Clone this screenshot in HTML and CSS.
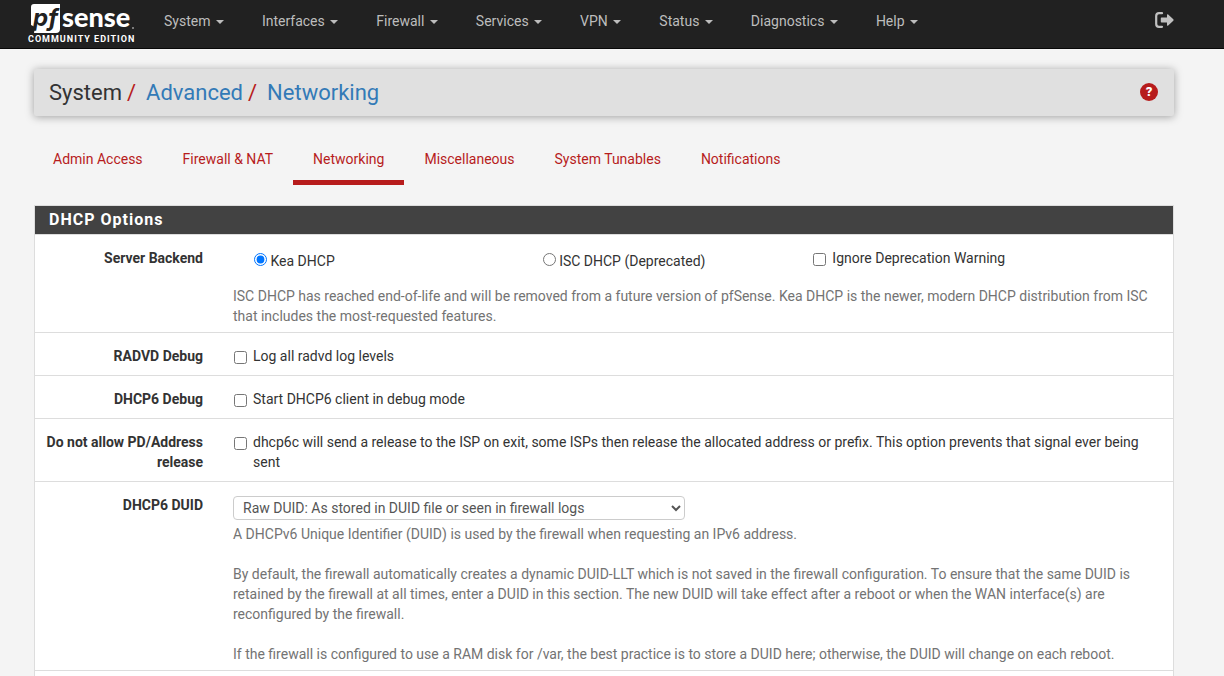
FILE: index.html
```html
<!DOCTYPE html>
<html lang="en">
<head>
    <meta charset="UTF-8">
    <title>System: Advanced: Networking</title>
    <link rel="stylesheet" href="styles.css">
</head>
<body>
    <header class="topbar">
        <a class="brand" href="#">
            <svg class="logo" width="108" height="34" viewBox="0 0 108 34" role="img">
                <path d="M6 4H32V29Q32 33 28 33H6L7 27L3 25V7Q3 4 6 4Z" fill="#fff"/>
                <text class="logo-pf" x="5" y="26">pf</text>
                <text class="logo-sense" x="34" y="27">sense</text>
                <circle cx="105" cy="28" r="1" fill="#999"/>
            </svg>
            <span class="edition">COMMUNITY EDITION</span>
        </a>
        <nav class="menu">
            <a class="menu-item" href="#">System <i class="caret"></i></a>
            <a class="menu-item" href="#">Interfaces <i class="caret"></i></a>
            <a class="menu-item" href="#">Firewall <i class="caret"></i></a>
            <a class="menu-item" href="#">Services <i class="caret"></i></a>
            <a class="menu-item" href="#">VPN <i class="caret"></i></a>
            <a class="menu-item" href="#">Status <i class="caret"></i></a>
            <a class="menu-item" href="#">Diagnostics <i class="caret"></i></a>
            <a class="menu-item" href="#">Help <i class="caret"></i></a>
        </nav>
        <a class="logout" href="#" aria-label="Logout">
            <svg width="19" height="16" viewBox="0 0 19 16">
                <path d="M7 1.2H4Q1.2 1.2 1.2 4V12Q1.2 14.8 4 14.8H7" fill="none" stroke="#c0c0c0" stroke-width="2.2" stroke-linecap="round"/>
                <path d="M6.5 5.5H12V3Q12 1.6 13.2 2.6L18.3 7.3Q19 8 18.3 8.7L13.2 13.4Q12 14.4 12 13V10.5H6.5Q5.8 10.5 5.8 9.8V6.2Q5.8 5.5 6.5 5.5Z" fill="#c0c0c0"/>
            </svg>
        </a>
    </header>

    <main class="container">
        <div class="page-title">
            <h1 class="crumbs">System<span class="slash">/</span><a href="#">Advanced</a><span class="slash">/</span><a href="#">Networking</a></h1>
            <a class="help-icon" href="#" aria-label="Help">?</a>
        </div>

        <nav class="tabs">
            <a class="tab" href="#">Admin Access</a>
            <a class="tab" href="#">Firewall &amp; NAT</a>
            <a class="tab active" href="#">Networking</a>
            <a class="tab" href="#">Miscellaneous</a>
            <a class="tab" href="#">System Tunables</a>
            <a class="tab" href="#">Notifications</a>
        </nav>

        <form class="panel">
            <h2 class="panel-title">DHCP Options</h2>

            <div class="row">
                <span class="row-label">Server Backend</span>
                <div class="field">
                    <div class="choices">
                        <label class="choice-radio"><input type="radio" name="backend" checked> Kea DHCP</label>
                        <label class="choice-radio"><input type="radio" name="backend"> ISC DHCP (Deprecated)</label>
                        <label class="check"><input type="checkbox"><span>Ignore Deprecation Warning</span></label>
                    </div>
                    <p class="help">ISC DHCP has reached end-of-life and will be removed from a future version of pfSense. Kea DHCP is the newer, modern DHCP distribution from ISC that includes the most-requested features.</p>
                </div>
            </div>

            <div class="row short">
                <span class="row-label">RADVD Debug</span>
                <div class="field">
                    <label class="check"><input type="checkbox"><span>Log all radvd log levels</span></label>
                </div>
            </div>

            <div class="row short">
                <span class="row-label">DHCP6 Debug</span>
                <div class="field">
                    <label class="check"><input type="checkbox"><span>Start DHCP6 client in debug mode</span></label>
                </div>
            </div>

            <div class="row short">
                <span class="row-label">Do not allow PD/Address release</span>
                <div class="field">
                    <label class="check"><input type="checkbox"><span>dhcp6c will send a release to the ISP on exit, some ISPs then release the allocated address or prefix. This option prevents that signal ever being sent</span></label>
                </div>
            </div>

            <div class="row">
                <label class="row-label" for="duid">DHCP6 DUID</label>
                <div class="field">
                    <select class="select" id="duid">
                        <option>Raw DUID: As stored in DUID file or seen in firewall logs</option>
                    </select>
                    <p class="help">A DHCPv6 Unique Identifier (DUID) is used by the firewall when requesting an IPv6 address.</p>
                    <p class="help">By default, the firewall automatically creates a dynamic DUID-LLT which is not saved in the firewall configuration. To ensure that the same DUID is retained by the firewall at all times, enter a DUID in this section. The new DUID will take effect after a reboot or when the WAN interface(s) are reconfigured by the firewall.</p>
                    <p class="help">If the firewall is configured to use a RAM disk for /var, the best practice is to store a DUID here; otherwise, the DUID will change on each reboot.</p>
                </div>
            </div>
        </form>
    </main>
</body>
</html>
```
FILE: styles.css
```css
*{
    box-sizing: border-box;
}
html{
    overflow: hidden;
}
body{
    margin: 0;
    background-color: #f4f4f4;
    color: #333;
    font-family: Roboto, sans-serif;
    font-size: 14px;
    line-height: 20px;
}
a{
    color: #337ab7;
    text-decoration: none;
}

/* top bar */
.topbar{
    display: flex;
    height: 49px;
    padding: 0 50px 0 28px;
    background-color: #212121;
    border-bottom: 1px solid #080808;
}
.brand{
    width: 120px;
    color: #fff;
}
.logo{
    display: block;
}
.logo-pf{
    font: italic 700 24px Inter, sans-serif;
    fill: #212121;
}
.logo-sense{
    font: 900 27px Lato, sans-serif;
    fill: #fff;
}
.edition{
    display: block;
    font-size: 9px;
    font-weight: 700;
    line-height: 10px;
    letter-spacing: 1px;
    white-space: nowrap;
}
.menu{
    display: flex;
    flex: 1;
    gap: 38px;
    padding: 11px 0 0 16px;
}
.menu-item{
    color: #bdbdbd;
    white-space: nowrap;
}
.caret{
    display: inline-block;
    margin-left: 2px;
    vertical-align: middle;
    border-top: 4px solid #bdbdbd;
    border-right: 4px solid transparent;
    border-left: 4px solid transparent;
}
.logout{
    padding-top: 12px;
}
.logout svg{
    display: block;
}

.container{
    padding: 20px 50px 0 34px;
}
.page-title{
    display: flex;
    align-items: center;
    justify-content: space-between;
    height: 47px;
    padding: 0 16px 0 15px;
    background-color: #e0e0e0;
    border-radius: 2px;
    box-shadow: 0 1px 8px rgba(0,0,0,0.35);
}
.crumbs{
    margin: 0;
    font-size: 22px;
    font-weight: 400;
}
.slash{
    margin: 0 10px 0 5px;
    color: #b71c1c;
}
.help-icon{
    width: 18px;
    height: 18px;
    margin-bottom: 2px;
    border-radius: 50%;
    background-color: #b71c1c;
    color: #fff;
    font-size: 13px;
    font-weight: 900;
    line-height: 18px;
    text-align: center;
}

.tabs{
    display: flex;
    padding-top: 23px;
}
.tab{
    height: 46px;
    padding: 10px 20px;
    border-bottom: 5px solid transparent;
    color: #b71c1c;
}
.tab:first-child{
    padding-left: 19px;
}
.tabs .active{
    border-bottom-color: #b71c1c;
}

/* panel */
.panel{
    margin-top: 20px;
    padding-bottom: 20px;
    background-color: #fff;
    border: 1px solid #ddd;
}
.panel-title{
    margin: 0;
    padding: 4px 14px;
    background-color: #424242;
    border-bottom: 1px solid #ddd;
    color: #fff;
    font-size: 16px;
    font-weight: 700;
    letter-spacing: 1px;
}
.row{
    display: flex;
    gap: 30px;
    padding: 13px 15px 6px 0;
    border-bottom: 1px solid #ddd;
}
.short{
    padding-bottom: 9px;
}
.row-label{
    flex: 0 0 168px;
    font-weight: 700;
    text-align: right;
}
.field{
    flex: 1;
}
.choices{
    display: grid;
    grid-template-columns: 310fr 270fr 346fr;
    height: 38px;
}
.choice-radio{
    padding-top: 3px;
}
.choice-radio:first-child{
    padding-left: 21px;
}
.choice-radio input{
    margin: 0;
}
.check{
    display: flex;
    gap: 6px;
}
.check input{
    flex: none;
    width: 13px;
    height: 13px;
    margin: 5px 0 0 1px;
}
.select{
    display: block;
    width: 452px;
    max-width: 100%;
    height: 24px;
    margin: 1px 0 4px;
    padding: 0 5px;
    background-color: #fff;
    border: 1px solid #ccc;
    border-radius: 4px;
    color: #555;
    font: inherit;
}
.help{
    margin: 0;
    color: #737373;
}
.help + .help{
    margin-top: 20px;
}
```
